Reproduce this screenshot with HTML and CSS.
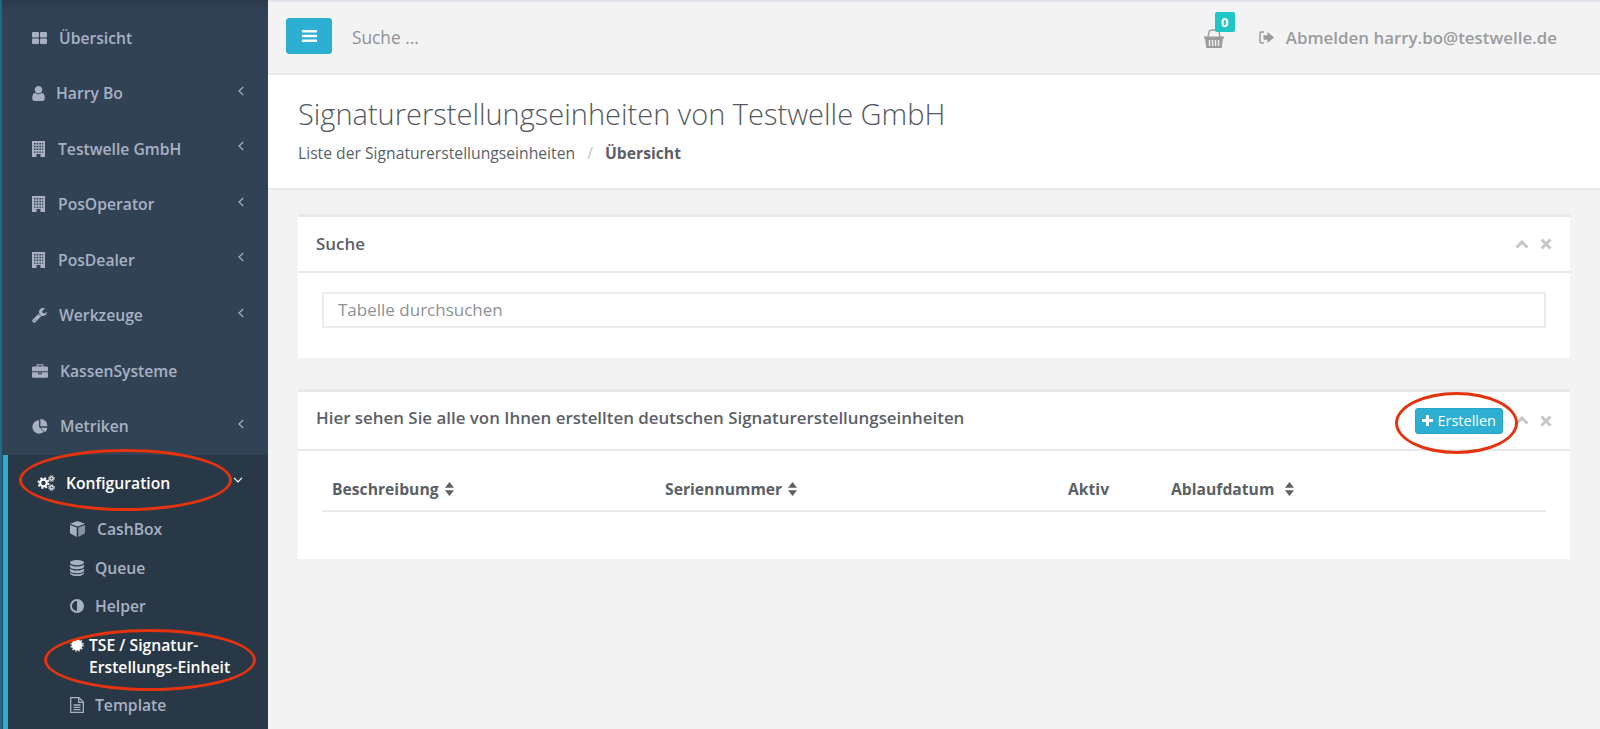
FILE: index.html
```html
<!DOCTYPE html>
<html lang="de">
<head>
    <meta charset="UTF-8">
    <title>Signaturerstellungseinheiten</title>
    <link rel="stylesheet" href="styles.css">
</head>
<body>
    <svg class="defs" width="0" height="0">
        <symbol id="i-grid" viewBox="0 0 15 12"><rect x="0" y="0" width="7" height="5.4" rx="1"/><rect x="8" y="0" width="7" height="5.4" rx="1"/><rect x="0" y="6.6" width="7" height="5.4" rx="1"/><rect x="8" y="6.6" width="7" height="5.4" rx="1"/></symbol>
        <symbol id="i-user" viewBox="256 128 1280 1536"><path d="M1536 1399q0 109-62.5 187t-150.5 78h-854q-88 0-150.5-78t-62.5-187q0-85 8.5-160.5t31.5-152 58.5-131 94-89 134.5-34.5q131 128 313 128t313-128q76 0 134.5 34.5t94 89 58.5 131 31.5 152 8.5 160.5zm-256-887q0 159-112.5 271.5t-271.5 112.5-271.5-112.5-112.5-271.5 112.5-271.5 271.5-112.5 271.5 112.5 112.5 271.5z"/></symbol>
        <symbol id="i-building" viewBox="0 0 13 16"><path fill-rule="evenodd" d="M0 0h13v16H0zM2 2v1.4h1.6V2zm2.7 0v1.4h1.6V2zm2.7 0v1.4H9V2zm2.5 0v1.4h1.3V2zM2 4.8v1.4h1.6V4.8zm2.7 0v1.4h1.6V4.8zm2.7 0v1.4H9V4.8zm2.500 0v1.4h1.3V4.8zM2 7.6V9h1.6V7.6zm2.7 0V9h1.6V7.6zm2.7 0V9H9V7.6zm2.5 0V9h1.3V7.6zM2 10.4v1.4h1.6v-1.4zm2.7 0v1.4h1.6v-1.4zm2.7 0v1.4H9v-1.4zm2.5 0v1.4h1.3v-1.4zM4.5 13v3h4v-3z"/></symbol>
        <symbol id="i-wrench" viewBox="64 128 1664 1664"><path d="M448 1472q0-26-19-45t-45-19-45 19-19 45 19 45 45 19 45-19 19-45zm644-420l-682 682q-37 37-90 37-52 0-91-37l-106-108q-38-36-38-90 0-53 38-91l681-681q39 98 114.5 173.5t173.5 114.5zm634-435q0 39-23 106-47 134-164.5 217.5t-258.5 83.5q-185 0-316.5-131.5t-131.5-316.5 131.5-316.5 316.5-131.5q58 0 121.5 16.5t107.5 46.5q16 11 16 28t-16 28l-293 169v224l193 107q5-3 79-48.5t135.5-81 70.5-35.5q15 0 23.5 10t8.5 25z"/></symbol>
        <symbol id="i-briefcase" viewBox="0 0 1792 1536"><path d="M640 256h512v-128h-512v128zm1152 640v480q0 66-47 113t-113 47h-1472q-66 0-113-47t-47-113v-480h672v160q0 26 19 45t45 19h320q26 0 45-19t19-45v-160h672zm-768 0v128h-256v-128h256zm768-480v384h-1792v-384q0-66 47-113t113-47h352v-160q0-40 28-68t68-28h576q40 0 68 28t28 68v160h352q66 0 113 47t47 113z"/></symbol>
        <symbol id="i-pie" viewBox="0 0 16 16"><path d="M7 1.2v7.3l5.1 5.1A7.2 7.2 0 1 1 7 1.2z"/><path d="M8.6 9.3h7.2a7.2 7.2 0 0 1-2.3 4.9z"/><path d="M8.4 0a7.4 7.4 0 0 1 7.5 7.7H8.4z"/></symbol>
        <symbol id="i-cogs" viewBox="0 0 18 16"><g fill="none" stroke="#fff"><circle cx="6.5" cy="8" r="3.3" stroke-width="2.2"/><circle cx="6.5" cy="8" r="5" stroke-width="1.800" stroke-dasharray="2 1.93"/><circle cx="14.500" cy="3.500" r="1.700" stroke-width="1.200"/><circle cx="14.500" cy="12.500" r="1.700" stroke-width="1.200"/><circle cx="14.500" cy="3.500" r="2.900" stroke-width=".9" stroke-dasharray="1.200 1.080"/><circle cx="14.500" cy="12.500" r="2.900" stroke-width=".9" stroke-dasharray="1.200 1.080"/></g></symbol>
        <symbol id="i-cube" viewBox="0 0 15 16"><path d="M7.5 0 15 2.7 7.5 5.4 0 2.7z"/><path d="M0 4v8.3l6.7 3.7V6.6z"/><path d="M15 4v8.3L8.3 16V6.6z" fill-opacity=".75"/></symbol>
        <symbol id="i-database" viewBox="0 0 14 16"><ellipse cx="7" cy="2.6" rx="7" ry="2.6"/><path d="M0 4.4C1.5 6 4 6.4 7 6.4s5.500-.4 7-2V7c-1 1.500-3.500 2.200-7 2.200S1 8.500 0 7z"/><path d="M0 8.400c1.500 1.600 4 2 7 2s5.500-.4 7-2V11c-1 1.500-3.500 2.200-7 2.200S1 12.500 0 11z"/><path d="M0 12.200c1.500 1.600 4 2 7 2s5.500-.4 7-2v1.200C13 15 10.500 16 7 16s-6-1-7-2.600z"/></symbol>
        <symbol id="i-adjust" viewBox="0 0 14 14"><path fill-rule="evenodd" d="M7 0a7 7 0 1 1 0 14A7 7 0 0 1 7 0zm0 2a5 5 0 0 0 0 10z"/></symbol>
        <symbol id="i-cert" viewBox="0 0 16 16"><circle cx="8" cy="8" r="6.200" fill="#fff"/><circle cx="8" cy="8" r="6.900" fill="none" stroke="#fff" stroke-width="1.400" stroke-dasharray="1.810 1.810"/></symbol>
        <symbol id="i-file" viewBox="0 0 14 16"><g fill="none" stroke-width="1.300"><path d="M.7.700h8.300l4.300 4.300v10.300H.7z"/><path d="M8.700.700v4.700h4.600M3.500 8h7M3.500 10.300h7M3.500 12.600h7"/></g></symbol>
        <symbol id="i-basket" viewBox="0 0 20 19"><path fill-rule="evenodd" d="M0 7.500h20v2h-1l-1.300 9.500H2.300L1 9.500H0zM4.800 11v6h1.400v-6zm3 0v6h1.400v-6zm3 0v6h1.400v-6zm3 0v6h1.400v-6z"/><path d="M4 8 5 3Q5.400 1 7.500 1h5q2.100 0 2.500 2l1 5" fill="none" stroke-width="1.400" stroke="currentColor"/></symbol>
        <symbol id="i-signout" viewBox="0 0 15 13"><path d="M5 1H2.500A1.500 1.500 0 0 0 1 2.500v8A1.500 1.500 0 0 0 2.500 12H5" fill="none" stroke="currentColor" stroke-width="1.500"/><path d="M8.500 1 15 6.500 8.500 12V8.700H4.500V4.300h4z"/></symbol>
        <symbol id="i-angle" viewBox="0 0 6 10"><path d="M5.200 1 1 5l4.200 4" fill="none" stroke="currentColor" stroke-width="1.200"/></symbol>
        <symbol id="i-sort" viewBox="0 0 9 14"><path d="M4.500 0 9 5.800H0zM0 8.200h9L4.500 14z"/></symbol>
    </svg>

    <aside class="sidebar">
        <ul class="nav">
            <li class="nav-item"><svg class="ico" width="15" height="12"><use href="#i-grid"/></svg><span class="lbl-12">Übersicht</span></li>
            <li class="nav-item"><svg class="ico" width="13" height="15"><use href="#i-user"/></svg><span class="lbl-11">Harry Bo</span><svg class="angle" width="6" height="10"><use href="#i-angle"/></svg></li>
            <li class="nav-item"><svg class="ico" width="13" height="16"><use href="#i-building"/></svg><span class="lbl-13">Testwelle GmbH</span><svg class="angle" width="6" height="10"><use href="#i-angle"/></svg></li>
            <li class="nav-item"><svg class="ico" width="13" height="16"><use href="#i-building"/></svg><span class="lbl-13">PosOperator</span><svg class="angle" width="6" height="10"><use href="#i-angle"/></svg></li>
            <li class="nav-item"><svg class="ico" width="13" height="16"><use href="#i-building"/></svg><span class="lbl-13">PosDealer</span><svg class="angle" width="6" height="10"><use href="#i-angle"/></svg></li>
            <li class="nav-item"><svg class="ico" width="15" height="15"><use href="#i-wrench"/></svg><span class="lbl-12">Werkzeuge</span><svg class="angle" width="6" height="10"><use href="#i-angle"/></svg></li>
            <li class="nav-item"><svg class="ico" width="16" height="14"><use href="#i-briefcase"/></svg><span class="lbl-12">KassenSysteme</span></li>
            <li class="nav-item"><svg class="ico" width="16" height="15"><use href="#i-pie"/></svg><span class="lbl-12">Metriken</span><svg class="angle" width="6" height="10"><use href="#i-angle"/></svg></li>
        </ul>
        <div class="active-group">
            <div class="active-head">
                <svg class="ico" width="18" height="16"><use href="#i-cogs"/></svg><span class="lbl-11">Konfiguration</span><svg class="angle down" width="6" height="10"><use href="#i-angle"/></svg>
                <div class="ring ring-konfig"></div>
            </div>
            <ul class="sub">
                <li class="sub-item"><svg class="ico" width="15" height="16"><use href="#i-cube"/></svg><span class="lbl-12">CashBox</span></li>
                <li class="sub-item"><svg class="ico" width="14" height="16"><use href="#i-database"/></svg><span class="lbl-11">Queue</span></li>
                <li class="sub-item"><svg class="ico" width="14" height="14"><use href="#i-adjust"/></svg><span class="lbl-11">Helper</span></li>
                <li class="sub-item sub-active"><svg class="ico" width="14" height="14"><use href="#i-cert"/></svg><span class="lbl-5">TSE / Signatur-<br>Erstellungs-Einheit</span>
                    <div class="ring ring-tse"></div>
                </li>
                <li class="sub-item"><svg class="ico stroked" width="14" height="16"><use href="#i-file"/></svg><span class="lbl-11">Template</span></li>
            </ul>
        </div>
    </aside>

    <main class="main">
        <header class="topbar">
            <button class="menu-btn"><svg width="15" height="12" viewBox="0 0 15 12"><rect width="15" height="2.500" rx=".5"/><rect y="4.700" width="15" height="2.500" rx=".5"/><rect y="9.400" width="15" height="2.500" rx=".5"/></svg></button>
            <span class="search-hint">Suche ...</span>
            <div class="cart">
                <svg class="cart-icon" width="20" height="19"><use href="#i-basket"/></svg>
                <span class="badge">0</span>
            </div>
            <svg class="signout" width="15" height="13"><use href="#i-signout"/></svg>
            <span class="user">Abmelden harry.bo@testwelle.de</span>
        </header>

        <section class="page-head">
            <h1>Signaturerstellungseinheiten von Testwelle GmbH</h1>
            <div class="crumbs">Liste der Signaturerstellungseinheiten <span class="sep">/</span> <strong>Übersicht</strong></div>
        </section>

        <div class="content">
            <section class="card">
                <div class="card-head search-head">
                    <h2>Suche</h2>
                    <div class="tools">
                        <svg width="14" height="9" viewBox="0 0 14 9"><path d="M1.500 7.500 7 2l5.500 5.500" fill="none" stroke="#c4c6c8" stroke-width="3"/></svg>
                        <svg width="12" height="12" viewBox="0 0 12 12"><path d="M1.500 1.500l9 9m0-9-9 9" fill="none" stroke="#c4c6c8" stroke-width="3"/></svg>
                    </div>
                </div>
                <div class="card-body search-body">
                    <input class="filter" type="text" placeholder="Tabelle durchsuchen">
                </div>
            </section>

            <section class="card">
                <div class="card-head list-head">
                    <h2>Hier sehen Sie alle von Ihnen erstellten deutschen Signaturerstellungseinheiten</h2>
                    <div class="tools">
                        <div class="create-wrap">
                            <button class="create-btn"><svg width="11" height="11" viewBox="0 0 11 11"><path d="M5.500 0v11M0 5.500h11" stroke="#fff" stroke-width="3"/></svg>Erstellen</button>
                            <div class="ring ring-create"></div>
                        </div>
                        <svg width="14" height="9" viewBox="0 0 14 9"><path d="M1.500 7.500 7 2l5.500 5.500" fill="none" stroke="#c4c6c8" stroke-width="3"/></svg>
                        <svg width="12" height="12" viewBox="0 0 12 12"><path d="M1.500 1.500l9 9m0-9-9 9" fill="none" stroke="#c4c6c8" stroke-width="3"/></svg>
                    </div>
                </div>
                <div class="card-body table-body">
                    <table>
                        <thead>
                            <tr>
                                <th class="col-desc">Beschreibung <svg class="sort" width="9" height="14"><use href="#i-sort"/></svg></th>
                                <th class="col-serial">Seriennummer <svg class="sort" width="9" height="14"><use href="#i-sort"/></svg></th>
                                <th class="col-active">Aktiv</th>
                                <th>Ablaufdatum <svg class="sort sort-wide" width="9" height="14"><use href="#i-sort"/></svg></th>
                            </tr>
                        </thead>
                    </table>
                </div>
            </section>
        </div>
    </main>
</body>
</html>
```

FILE: styles.css
```css
* {
    box-sizing: border-box;
}
html, body {
    height: 100%;
}
body {
    margin: 0;
    display: flex;
    height: 729px;
    overflow: hidden;
    font-family: "Open Sans", sans-serif;
    font-size: 15px;
    color: #5b5f66;
    background-color: #f3f3f4;
}
.defs {
    position: absolute;
}
ul {
    list-style: none;
    margin: 0;
    padding: 0;
}

/* sidebar */
.sidebar {
    width: 268px;
    flex-shrink: 0;
    height: 729px;
    padding-top: 10px;
    overflow: hidden;
    background: linear-gradient(#2b3a4a, #324255 12px);
    border-left: 2px solid #1d6a8a;
    color: #a7b1c2;
    font-size: 15.7px;
    font-weight: 600;
}
.nav-item {
    display: flex;
    align-items: center;
    height: 55.5px;
    padding-left: 30px;
    padding-right: 24px;
}
.ico {
    flex-shrink: 0;
    fill: #a7b1c2;
    stroke: none;
}
.ico.stroked {
    stroke: #a7b1c2;
    fill: none;
}
.lbl-12 { margin-left: 12px; }
.lbl-11 { margin-left: 11px; }
.lbl-13 { margin-left: 13px; }
.lbl-5 { margin-left: 5px; line-height: 22px; }
.angle {
    margin-left: auto;
    margin-top: -5px;
    color: #a7b1c2;
}
.angle.down {
    transform: rotate(-90deg);
    color: #fff;
}
.active-group {
    background-color: #293846;
    border-left: 5px solid #27b0d4;
    margin-left: 1px;
    margin-top: 1px;
    height: 300px;
}
.active-head {
    position: relative;
    display: flex;
    align-items: center;
    height: 55px;
    padding-left: 29px;
    padding-right: 27px;
    color: #fff;
}
.active-head .ico {
    fill: #fff;
}
.sub {
    padding-left: 62px;
}
.sub-item {
    position: relative;
    display: flex;
    align-items: center;
    height: 38.5px;
}
.sub-active {
    align-items: flex-start;
    height: 60px;
    padding-top: 8px;
    color: #fff;
}
.sub-active .ico {
    margin-top: 4px;
}
.ring {
    position: absolute;
    border: 3px solid #e6330f;
    border-radius: 50%;
    pointer-events: none;
}
.ring-konfig {
    left: 11px;
    top: -6px;
    width: 213px;
    height: 62px;
}
.ring-tse {
    left: -26px;
    top: 3px;
    width: 212px;
    height: 62px;
}

/* top bar */
.main {
    flex: 1;
    min-width: 0;
}
.topbar {
    display: flex;
    align-items: center;
    height: 75px;
    padding: 0 43px 0 18px;
    background-color: #f3f3f4;
    border-top: 2px solid #e2e3ea;
    border-bottom: 2px solid #e7eaec;
}
.menu-btn {
    width: 46px;
    height: 36px;
    margin-top: -3px;
    padding: 0;
    border: 1px solid #2aaed2;
    border-radius: 3px;
    background-color: #2cafd3;
}
.menu-btn svg {
    display: block;
    margin: 0 auto;
    fill: #fff;
}
.search-hint {
    margin-left: 20px;
    font-size: 17.3px;
    color: #8d9196;
}
.cart {
    position: relative;
    margin-left: auto;
    height: 19px;
    margin-top: 1px;
}
.cart-icon {
    display: block;
    fill: #999c9e;
    color: #999c9e;
}
.badge {
    position: absolute;
    left: 11px;
    top: -17px;
    width: 20px;
    height: 20px;
    border-radius: 2px;
    background-color: #20c6c6;
    color: #fff;
    font-size: 13px;
    font-weight: 700;
    line-height: 20px;
    text-align: center;
}
.signout {
    margin-left: 35px;
    fill: #999c9e;
    color: #999c9e;
}
.user {
    margin-left: 12px;
    font-size: 16.9px;
    font-weight: 600;
    color: #999c9e;
}

/* page heading */
.page-head {
    height: 115px;
    padding: 19px 30px 0;
    background-color: #fff;
    border-bottom: 2px solid #e7eaec;
}
h1 {
    margin: 0;
    font-size: 29px;
    font-weight: 300;
    line-height: 40px;
    color: #55595f;
}
.crumbs {
    margin-top: 9px;
    font-size: 15.7px;
    line-height: 20px;
}
.sep {
    margin: 0 8px;
    color: #c4c6c8;
}
.crumbs strong {
    font-weight: 700;
}

/* cards */
.content {
    padding: 24px 30px;
}
.card {
    margin-bottom: 31px;
    background-color: #fff;
    border-top: 3px solid #e7eaec;
}
.card-head {
    display: flex;
    align-items: center;
    height: 56px;
    padding: 0 18px;
    border-bottom: 2px solid #e7eaec;
}
.search-head h2 {
    margin-top: -2px;
}
.list-head {
    height: 59px;
}
.list-head h2 {
    margin-top: -6px;
}
h2 {
    margin: 0;
    font-size: 16.9px;
    font-weight: 600;
    color: #5b5f66;
}
.tools {
    display: flex;
    align-items: center;
    gap: 11px;
    margin-left: auto;
}
.card-body {
    padding: 19px 24px;
}
.search-body {
    height: 85px;
}
.filter {
    display: block;
    width: 100%;
    height: 36px;
    padding: 0 14px 2px;
    border: 2px solid #ebecec;
    font-family: inherit;
    font-size: 17px;
}
.filter::placeholder {
    color: #8d9196;
}
.create-wrap {
    position: relative;
    margin-right: 1px;
}
.create-btn {
    display: flex;
    align-items: center;
    gap: 4px;
    height: 26px;
    padding: 0 6px;
    border: 1px solid #27a7ca;
    border-radius: 3px;
    background-color: #2cafd3;
    color: #fff;
    font-family: inherit;
    font-size: 14.5px;
}
.ring-create {
    left: -20px;
    top: -16px;
    width: 123px;
    height: 62px;
}
.table-body {
    height: 108px;
    padding-top: 17px;
}
table {
    width: 100%;
    border-collapse: collapse;
    table-layout: fixed;
}
th {
    height: 43px;
    padding: 0 10px;
    border-bottom: 2px solid #e7eaec;
    font-size: 15.7px;
    font-weight: 700;
    text-align: left;
    white-space: nowrap;
}
.col-desc { width: 333px; }
.col-serial { width: 403px; }
.col-active { width: 103px; }
.sort {
    fill: #5b5f66;
    vertical-align: -1px;
    margin-left: 2px;
}
.sort-wide {
    margin-left: 7px;
}
```
